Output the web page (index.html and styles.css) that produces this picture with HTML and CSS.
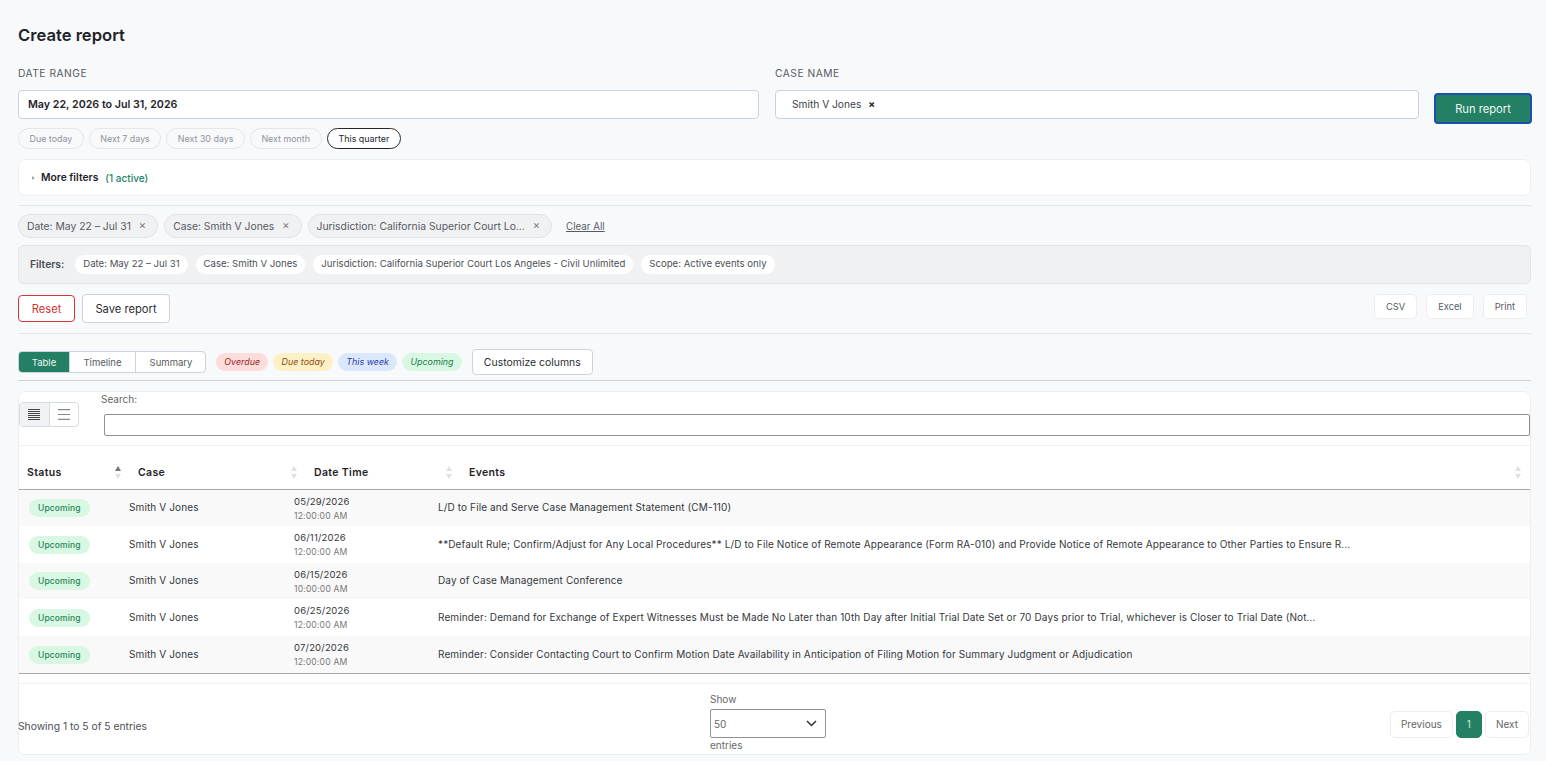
FILE: index.html
```html
<!DOCTYPE html>
<html lang="en">
<head>
    <meta charset="UTF-8">
    <title>Create report</title>
    <link rel="stylesheet" href="styles.css">
</head>
<body>

<h1 class="title">Create report</h1>

<!-- top form -->
<div class="form-row">
    <div class="field field-date">
        <label class="label">DATE RANGE</label>
        <div class="input input-date">May 22, 2026 to Jul 31, 2026</div>
    </div>
    <div class="field field-case">
        <label class="label">CASE NAME</label>
        <div class="input input-case">Smith V Jones <span class="tag-x">×</span></div>
    </div>
    <button class="run-btn">Run report</button>
</div>

<div class="quick">
    <span class="quick-chip">Due today</span>
    <span class="quick-chip">Next 7 days</span>
    <span class="quick-chip">Next 30 days</span>
    <span class="quick-chip">Next month</span>
    <span class="quick-chip quick-on">This quarter</span>
</div>

<div class="more">
    <span class="more-arrow"></span>
    <b>More filters</b>
    <span class="more-count">(1 active)</span>
</div>

<hr class="line line-a">

<!-- active filters -->
<div class="active-row">
    <span class="active-chip">Date: May 22 – Jul 31 <i>×</i></span>
    <span class="active-chip">Case: Smith V Jones <i>×</i></span>
    <span class="active-chip">Jurisdiction: California Superior Court Lo... <i>×</i></span>
    <a class="clear">Clear All</a>
</div>

<div class="filters-bar">
    <b>Filters:</b>
    <span class="pill">Date: May 22 – Jul 31</span>
    <span class="pill">Case: Smith V Jones</span>
    <span class="pill">Jurisdiction: California Superior Court Los Angeles - Civil Unlimited</span>
    <span class="pill">Scope: Active events only</span>
</div>

<div class="actions">
    <button class="btn btn-reset">Reset</button>
    <button class="btn btn-save">Save report</button>
    <div class="exports">
        <button class="export">CSV</button>
        <button class="export">Excel</button>
        <button class="export">Print</button>
    </div>
</div>

<hr class="line line-b">

<div class="view-row">
    <div class="tabs">
        <span class="tab tab-on">Table</span>
        <span class="tab">Timeline</span>
        <span class="tab">Summary</span>
    </div>
    <span class="legend legend-red">Overdue</span>
    <span class="legend legend-yellow">Due today</span>
    <span class="legend legend-blue">This week</span>
    <span class="legend legend-green">Upcoming</span>
    <button class="btn btn-columns">Customize columns</button>
</div>

<hr class="line line-c">

<!-- table card -->
<div class="card">
    <div class="card-top">
        <div class="density">
            <span class="density-btn density-on">
                <svg width="12" height="11" viewBox="0 0 12 11"><path d="M0 .5h12M0 2.500h12M0 4.500h12M0 6.500h12M0 8.500h12M0 10.500h12" stroke="#444" stroke-width="1"/></svg>
            </span>
            <span class="density-btn">
                <svg width="12" height="11" viewBox="0 0 12 11"><path d="M0 .6h12M0 5.500h12M0 10.400h12" stroke="#888" stroke-width="1.200"/></svg>
            </span>
        </div>
        <div class="search">
            <label>Search:</label>
            <div class="search-box"></div>
        </div>
    </div>

    <!-- head and body are separate tables, their columns do not line up -->
    <table class="grid grid-head">
        <colgroup>
            <col class="h-status">
            <col class="h-case">
            <col class="h-date">
            <col>
        </colgroup>
        <thead>
            <tr>
                <th>Status<span class="sort sort-up"></span></th>
                <th>Case<span class="sort"></span></th>
                <th>Date Time<span class="sort"></span></th>
                <th>Events<span class="sort"></span></th>
            </tr>
        </thead>
    </table>
    <table class="grid grid-body">
        <colgroup>
            <col class="b-status">
            <col class="b-case">
            <col class="b-date">
            <col>
        </colgroup>
        <tbody>
            <tr class="odd">
                <td class="c-status"><span class="status">Upcoming</span></td>
                <td>Smith V Jones</td>
                <td class="c-date">05/29/2026<small>12:00:00 AM</small></td>
                <td>L/D to File and Serve Case Management Statement (CM-110)</td>
            </tr>
            <tr>
                <td class="c-status"><span class="status">Upcoming</span></td>
                <td>Smith V Jones</td>
                <td class="c-date">06/11/2026<small>12:00:00 AM</small></td>
                <td>**Default Rule; Confirm/Adjust for Any Local Procedures** L/D to File Notice of Remote Appearance (Form RA-010) and Provide Notice of Remote Appearance to Other Parties to Ensure R...</td>
            </tr>
            <tr class="odd">
                <td class="c-status"><span class="status">Upcoming</span></td>
                <td>Smith V Jones</td>
                <td class="c-date">06/15/2026<small>10:00:00 AM</small></td>
                <td>Day of Case Management Conference</td>
            </tr>
            <tr>
                <td class="c-status"><span class="status">Upcoming</span></td>
                <td>Smith V Jones</td>
                <td class="c-date">06/25/2026<small>12:00:00 AM</small></td>
                <td>Reminder: Demand for Exchange of Expert Witnesses Must be Made No Later than 10th Day after Initial Trial Date Set or 70 Days prior to Trial, whichever is Closer to Trial Date (Not...</td>
            </tr>
            <tr class="odd">
                <td class="c-status"><span class="status">Upcoming</span></td>
                <td>Smith V Jones</td>
                <td class="c-date">07/20/2026<small>12:00:00 AM</small></td>
                <td>Reminder: Consider Contacting Court to Confirm Motion Date Availability in Anticipation of Filing Motion for Summary Judgment or Adjudication</td>
            </tr>
        </tbody>
    </table>

    <div class="card-foot">
        <div class="info">Showing 1 to 5 of 5 entries</div>
        <div class="length">
            <span>Show</span>
            <div class="length-box">50
                <svg width="11" height="7" viewBox="0 0 11 7"><path d="M1 1l4.500 4.500L10 1" fill="none" stroke="#333" stroke-width="1.500"/></svg>
            </div>
            <span>entries</span>
        </div>
        <div class="pager">
            <span class="page">Previous</span>
            <span class="page page-on">1</span>
            <span class="page">Next</span>
        </div>
    </div>
</div>

</body>
</html>
```

FILE: styles.css
```css
* {
    box-sizing: border-box;
}

html, body {
    height: 761px;
    overflow: hidden;
}

body {
    margin: 0;
    padding: 0 15px 0 18px;
    background: #f8f9fb;
    color: #1f2328;
    font: 10px/1.2 Inter, "Liberation Sans", sans-serif;
}

button {
    font-family: inherit;
    cursor: pointer;
}

.title {
    margin: 0;
    padding-top: 24px;
    height: 66px;
    font-size: 16.600px;
    line-height: 22px;
    font-weight: 600;
}

/* top form */
.form-row {
    display: flex;
    align-items: flex-start;
    height: 62px;
}

.field-date {
    width: 741px;
    margin-right: 16px;
}

.field-case {
    width: 644px;
    margin-right: 15px;
}

.label {
    display: block;
    height: 24px;
    font-size: 10.250px;
    line-height: 14px;
    letter-spacing: .5px;
    color: #555b64;
}

.input {
    height: 29px;
    background: #fff;
    border: 1px solid #c9d3df;
    border-radius: 4px;
    line-height: 27px;
}

.input-date {
    padding-left: 9px;
    font-size: 10.700px;
    font-weight: 600;
}

.input-case {
    padding-left: 16px;
    font-size: 10.200px;
    line-height: 26px;
    color: #3c4148;
}

.tag-x {
    margin-left: 4px;
    font-weight: 700;
    color: #222;
}

.run-btn {
    flex-shrink: 0;
    width: 98px;
    height: 31px;
    margin-top: 27px;
    margin-right: -1px;
    background: #238064;
    color: #eef8f4;
    border: 2px solid #1b4fb0;
    border-radius: 4px;
    font-size: 11.200px;
}

.quick {
    display: flex;
    gap: 5px;
    height: 21px;
}

.quick-chip {
    padding: 0 10.500px;
    border: 1px solid #e3e6ea;
    border-radius: 11px;
    font-size: 8.900px;
    line-height: 19px;
    color: #8d939b;
}

.quick-on {
    padding: 0 11px;
    border-color: #23272c;
    background: #fff;
    color: #23272c;
}

.more {
    display: flex;
    align-items: center;
    height: 37px;
    margin-top: 10px;
    padding-left: 13px;
    background: #fff;
    border: 1px solid #eceef1;
    border-radius: 7px;
    font-size: 10.300px;
}

.more b {
    font-weight: 600;
}

.more-arrow {
    width: 0;
    height: 0;
    margin-right: 6px;
    border-left: 3px solid #aaa;
    border-top: 2px solid transparent;
    border-bottom: 2px solid transparent;
}

.more-count {
    margin-left: 7px;
    color: #238064;
    font-weight: 500;
    font-size: 10px;
}

.line {
    margin: 0;
    border: 0;
    height: 1px;
    background: #e6e8ec;
}

.line-a {
    margin-top: 9px;
}

/* active filters */
.active-row {
    display: flex;
    align-items: center;
    gap: 6px;
    height: 24px;
    margin-top: 8px;
}

.active-chip {
    display: flex;
    align-items: center;
    height: 24px;
    padding: 1px 11px 0 8px;
    gap: 8px;
    background: #f0f1f3;
    border: 1px solid #e1e3e7;
    border-radius: 12px;
    font-size: 10.350px;
    color: #555b64;
}

.active-chip i {
    font-style: normal;
    color: #777;
    font-size: 11px;
    margin-top: -2px;
}

.clear {
    margin-left: 8px;
    padding-top: 1px;
    font-size: 9.750px;
    color: #555b64;
    text-decoration: underline;
}

.filters-bar {
    display: flex;
    align-items: center;
    gap: 8px;
    height: 39px;
    margin-top: 7px;
    padding-left: 11px;
    background: #f0f1f3;
    border: 1px solid #e3e5e9;
    border-radius: 6px;
    font-size: 9.600px;
    color: #4a4f56;
}

.filters-bar b {
    margin-right: 3px;
    font-weight: 600;
    font-size: 10.300px;
}

.pill {
    padding: 0 8px;
    height: 19px;
    line-height: 18px;
    background: #fff;
    border-radius: 10px;
}

.actions {
    display: flex;
    align-items: center;
    gap: 7px;
    height: 29px;
    margin-top: 10px;
}

.btn {
    height: 29px;
    padding-top: 2px;
    background: #fff;
    border: 1px solid #ccd3dc;
    border-radius: 4px;
    font-size: 11.200px;
    color: #2a2e33;
}

.btn-reset {
    width: 57px;
    height: 27px;
    color: #d2353a;
    border-color: #d2353a;
}

.btn-save {
    width: 88px;
}

.exports {
    display: flex;
    align-self: flex-start;
    gap: 9px;
    margin-left: auto;
    margin-right: 4px;
}

.export {
    height: 25px;
    padding: 0 11px;
    background: #fff;
    border: 1px solid #eceef1;
    border-radius: 5px;
    font-size: 9.300px;
    color: #555b64;
}

.line-b {
    margin-top: 10px;
}

.view-row {
    display: flex;
    align-items: center;
    height: 26px;
    margin-top: 15px;
}

.tabs {
    display: flex;
    width: 188px;
    height: 22px;
    background: #fff;
    border: 1px solid #ccd3dc;
    border-radius: 4px;
    overflow: hidden;
    margin-right: 10px;
}

.tab {
    flex: 0 0 auto;
    width: 66px;
    font-size: 9.500px;
    line-height: 21px;
    text-align: center;
    color: #555b64;
    border-left: 1px solid #ccd3dc;
}

.tab:last-child {
    width: 71px;
}

.tab-on {
    width: 50px;
    border-left: 0;
    background: #238064;
    color: #e8f5f0;
}

.legend {
    height: 18px;
    margin-right: 5px;
    padding: 0 8.300px;
    border-radius: 9px;
    font-size: 8.900px;
    line-height: 18px;
    font-style: italic;
}

.legend-red {
    background: #fddcdc;
    color: #9b1c1c;
}

.legend-yellow {
    background: #fdf0c4;
    color: #8a4b12;
}

.legend-blue {
    background: #dbe7fd;
    color: #2c3fa8;
}

.legend-green {
    background: #d8f8e4;
    color: #1e7a46;
}

.btn-columns {
    width: 121px;
    height: 26px;
    margin-left: 5px;
    padding-top: 1px;
    font-size: 10.450px;
}

.line-c {
    margin-top: 5px;
    background: #c9d3df;
}

/* table card */
.card {
    height: 364px;
    margin-top: 10px;
    background: #fff;
    border: 1px solid #eceef1;
    border-radius: 7px;
}

.card-top {
    display: flex;
    height: 54px;
    border-bottom: 1px solid #eef0f2;
}

.density {
    display: flex;
    width: 60px;
    height: 25px;
    margin-top: 10px;
    border: 1px solid #d5dbe2;
    border-radius: 4px;
    overflow: hidden;
}

.density-btn {
    flex: 1;
    display: flex;
    align-items: center;
    justify-content: center;
    padding-bottom: 1px;
}

.density-on {
    background: #f0f2f4;
    border-right: 1px solid #d5dbe2;
}

.search {
    flex: 1;
    margin-left: 22px;
    color: #666;
}

.search label {
    display: block;
    height: 22px;
    padding-top: 1px;
}

.search-box {
    height: 22px;
    margin-left: 3px;
    background: #fff;
    border: 1px solid #919191;
    border-radius: 2px;
}

.grid {
    width: 100%;
    border-collapse: collapse;
    table-layout: fixed;
}

.h-status {
    width: 111px;
}

.h-case {
    width: 176px;
}

.h-date {
    width: 155px;
}

.b-status {
    width: 110px;
}

.b-case {
    width: 165px;
}

.b-date {
    width: 144px;
}

.grid th {
    position: relative;
    height: 43px;
    padding: 13px 0 0 8px;
    text-align: left;
    font-size: 10.500px;
    font-weight: 600;
    letter-spacing: .35px;
    border-bottom: 1px solid #a9a9a9;
}

.sort {
    position: absolute;
    right: 8px;
    top: 20px;
    width: 7px;
    height: 13px;
}

.sort::before,
.sort::after {
    content: "";
    position: absolute;
    left: 0;
    border-left: 3px solid transparent;
    border-right: 3px solid transparent;
}

.sort::before {
    top: 0;
    border-bottom: 5px solid #dfe1e4;
}

.sort::after {
    bottom: 0;
    border-top: 5px solid #dfe1e4;
}

.sort-up::before {
    border-bottom-color: #777;
}

.grid td {
    height: 36px;
    padding: 0 0 1px;
    font-size: 10px;
    letter-spacing: .12px;
    color: #33373c;
    white-space: nowrap;
    overflow: hidden;
}

.grid tr:nth-child(even) td {
    height: 37px;
}

.odd td {
    background: #f9f9f9;
}

.grid tbody tr:last-child td {
    height: 38px;
    border-bottom: 1px solid #a9a9a9;
}

.grid .c-status {
    padding: 1px 0 0 10px;
}

.grid .c-date {
    padding: 2px 0 0;
    font-size: 9.500px;
    letter-spacing: .18px;
    line-height: 14px;
}

.c-date small {
    display: block;
    font-size: 8.600px;
    color: #777;
}

.status {
    display: inline-block;
    height: 18px;
    padding: 0 9px;
    border-radius: 9px;
    background: #d8f8e4;
    color: #2a8557;
    font-size: 8.500px;
    font-weight: 500;
    line-height: 18px;
    vertical-align: middle;
}

.card-foot {
    display: flex;
    height: 71px;
    margin-top: 9px;
    border-top: 1px solid #eef0f2;
    font-size: 10px;
    color: #4a4f56;
}

.info {
    width: 692px;
    padding-top: 36px;
    margin-left: -1px;
    font-size: 10.300px;
}

.length {
    width: 116px;
    padding-top: 9px;
    color: #666;
}

.length-box {
    display: flex;
    justify-content: space-between;
    align-items: center;
    height: 29px;
    margin: 4px 0 1px;
    padding: 0 8px 0 3px;
    border: 1px solid #919191;
    border-radius: 2px;
}

.pager {
    display: flex;
    gap: 3px;
    margin-left: auto;
    padding-top: 27px;
    margin-right: 1px;
}

.page {
    height: 27px;
    padding: 0 10px;
    line-height: 25px;
    background: #fff;
    border: 1px solid #eceef1;
    border-radius: 5px;
    color: #666;
}

.page-on {
    background: #238064;
    border-color: #238064;
    color: #cfe8df;
}
```
